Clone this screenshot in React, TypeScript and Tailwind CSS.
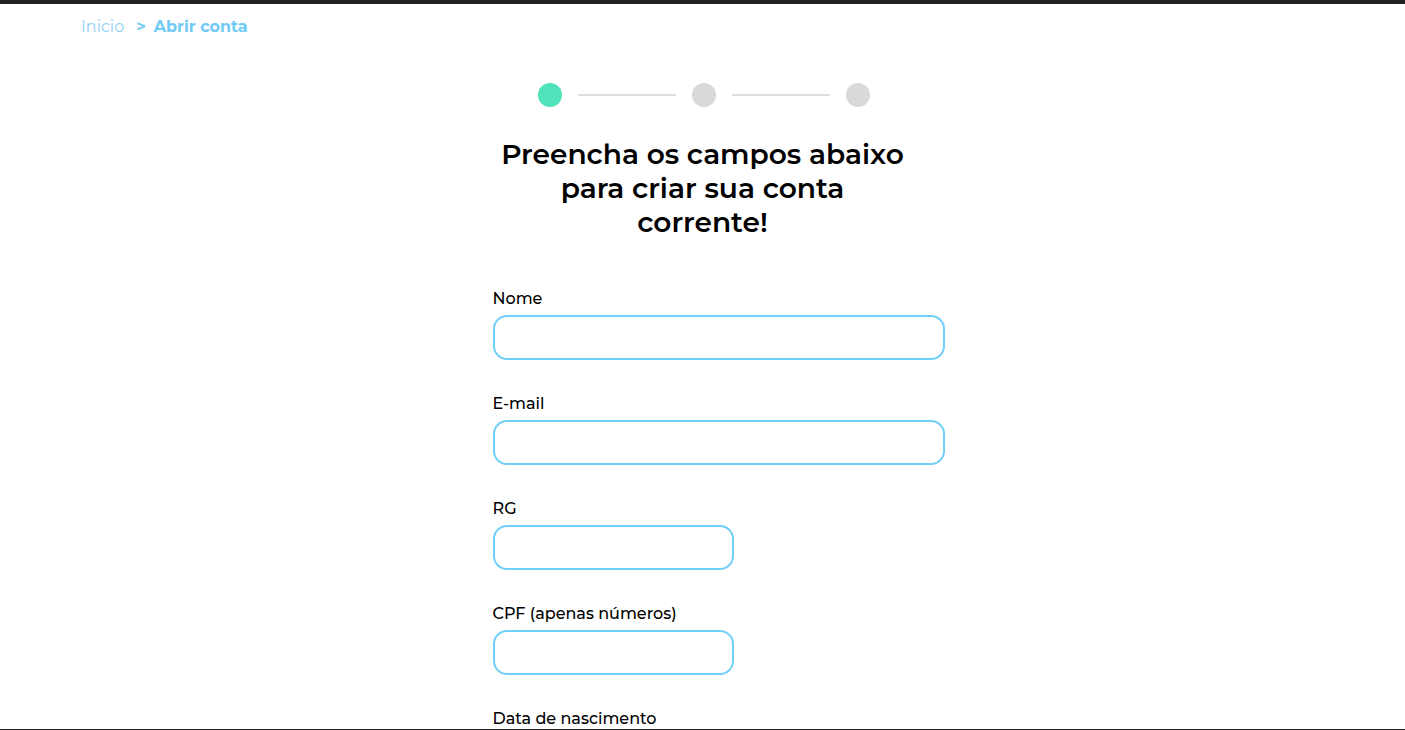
export default function App() {
  const fields = [
    { label: "Nome", wide: true },
    { label: "E-mail", wide: true },
    { label: "RG", wide: false },
    { label: "CPF (apenas números)", wide: false },
    { label: "Data de nascimento", wide: false },
  ];

  return (
    <div
      className="min-h-screen bg-white text-black"
      style={{ fontFamily: "Montserrat, 'Open Sans', 'Noto Sans', sans-serif" }}
    >
      <div className="h-[4px] bg-[#222222]" />

      <nav className="flex items-center pl-[81px] pt-[14px] text-[16px] leading-[18px]">
        <span className="text-[#8fd3f5]">Inicio</span>
        <span className="ml-3 font-bold text-[#6fcbf5]">&gt;</span>
        <span className="ml-2 font-bold text-[#6fcbf5]">Abrir conta</span>
      </nav>

      <div className="mt-[47px] flex items-center justify-center pl-[2px]">
        <div className="h-6 w-6 rounded-full bg-[#50e3b9]" />
        <div className="mx-4 h-[2px] w-[98px] bg-[#dddddd]" />
        <div className="h-6 w-6 rounded-full bg-[#d9d9d9]" />
        <div className="mx-4 h-[2px] w-[98px] bg-[#dddddd]" />
        <div className="h-6 w-6 rounded-full bg-[#d9d9d9]" />
      </div>

      <h1 className="mt-[30px] text-center text-[28px] font-semibold leading-[34px]">
        Preencha os campos abaixo
        <br />
        para criar sua conta
        <br />
        corrente!
      </h1>

      <form className="mx-auto mt-[50px] flex w-[482px] flex-col gap-[34px] pl-[31px]">
        {fields.map((f) => (
          <label key={f.label} className="flex flex-col">
            <span className="text-[16px] font-medium leading-[20px]">{f.label}</span>
            <input
              type="text"
              className={`mt-[6px] h-[45px] rounded-[14px] border-2 border-[#72d0f8] px-4 outline-none ${
                f.wide ? "w-[452px]" : "w-[241px]"
              }`}
            />
          </label>
        ))}
      </form>

      <div className="fixed bottom-0 left-0 right-0 h-px bg-[#222222]" />
    </div>
  );
}
